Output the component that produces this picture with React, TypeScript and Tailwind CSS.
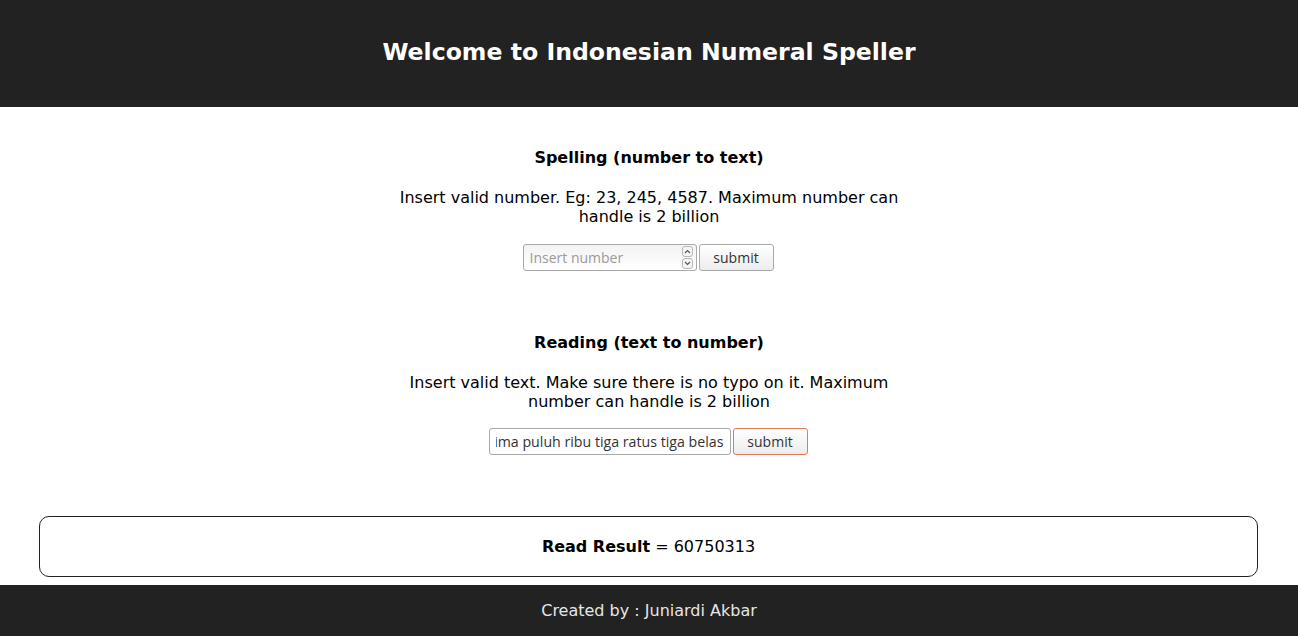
import { useState } from "react";

const uiFont = "font-['Open_Sans','DejaVu_Sans',sans-serif]";

function Spinner() {
  return (
    <div className="flex flex-col gap-px mr-[3px]">
      <div className="w-[11px] h-[11px] rounded-[3px] border border-[#b9b9b9] bg-[#f4f4f4] flex items-center justify-center">
        <svg width="7" height="5" viewBox="0 0 7 5">
          <path d="M1 4 L3.5 1.5 L6 4" fill="none" stroke="#555" strokeWidth="1.1" />
        </svg>
      </div>
      <div className="w-[11px] h-[11px] rounded-[3px] border border-[#b9b9b9] bg-[#f4f4f4] flex items-center justify-center">
        <svg width="7" height="5" viewBox="0 0 7 5">
          <path d="M1 1 L3.5 3.5 L6 1" fill="none" stroke="#555" strokeWidth="1.1" />
        </svg>
      </div>
    </div>
  );
}

export default function App() {
  const [num, setNum] = useState("");
  const [text, setText] = useState("lima puluh ribu tiga ratus tiga belas");

  return (
    <div className="min-h-screen bg-white text-black font-['DejaVu_Sans',sans-serif] flex flex-col">
      {/* header */}
      <header className="h-[107px] bg-[#222222] flex items-center justify-center">
        <h1 className="text-[23.6px] font-bold text-white leading-[28px] -mt-[4px]">
          Welcome to Indonesian Numeral Speller
        </h1>
      </header>

      {/* spelling */}
      <section className="flex flex-col items-center pt-[41px]">
        <h3 className="text-[16px] font-bold leading-[19px]">Spelling (number to text)</h3>
        <p className="mt-[21px] w-[500px] text-center text-[16px] leading-[19px]">
          Insert valid number. Eg: 23, 245, 4587. Maximum number can handle is 2 billion
        </p>
        <div className="mt-[18px] flex items-center gap-[2px] -ml-[2px]">
          <div className="w-[174px] h-[27px] rounded-[3px] border border-[#a9a9a9] bg-gradient-to-b from-[#f3f3f3] to-white flex items-center">
            <input
              value={num}
              onChange={(e) => setNum(e.target.value)}
              placeholder="Insert number"
              className={`${uiFont} flex-1 min-w-0 bg-transparent outline-none pl-[6px] text-[14px] text-[#333] placeholder:text-[#9a9a9a]`}
            />
            <Spinner />
          </div>
          <button className={`${uiFont} w-[75px] h-[27px] rounded-[3px] border border-[#a9a9a9] bg-gradient-to-b from-white to-[#ececec] text-[14px] text-[#333]`}>
            submit
          </button>
        </div>
      </section>

      {/* reading */}
      <section className="flex flex-col items-center pt-[62px]">
        <h3 className="text-[16px] font-bold leading-[19px]">Reading (text to number)</h3>
        <p className="mt-[21px] w-[500px] text-center text-[16px] leading-[19px]">
          Insert valid text. Make sure there is no typo on it. Maximum number can handle is 2 billion
        </p>
        <div className="mt-[17px] flex items-center gap-[2px] -ml-[2px]">
          <div className="w-[242px] h-[27px] rounded-[3px] border border-[#a9a9a9] bg-white flex items-center overflow-hidden">
            <input
              value={text}
              onChange={(e) => setText(e.target.value)}
              className={`${uiFont} w-full bg-transparent outline-none px-[6px] text-[14.2px] text-[#333] [direction:rtl]`}
            />
          </div>
          <button className={`${uiFont} w-[75px] h-[27px] rounded-[3px] border border-[#e07b53] bg-gradient-to-b from-white to-[#ececec] text-[14px] text-[#333]`}>
            submit
          </button>
        </div>
      </section>

      {/* result */}
      <div className="ml-[39px] mr-[40px] mt-[61px] h-[61px] rounded-[10px] border border-[#222] flex items-center justify-center text-[16px]">
        <span>
          <b>Read Result</b> = 60750313
        </span>
      </div>

      {/* footer */}
      <footer className="mt-[8px] h-[51px] bg-[#222222] flex items-center justify-center text-[16px] text-[#e6e6e6]">
        Created by : Juniardi Akbar
      </footer>
    </div>
  );
}
